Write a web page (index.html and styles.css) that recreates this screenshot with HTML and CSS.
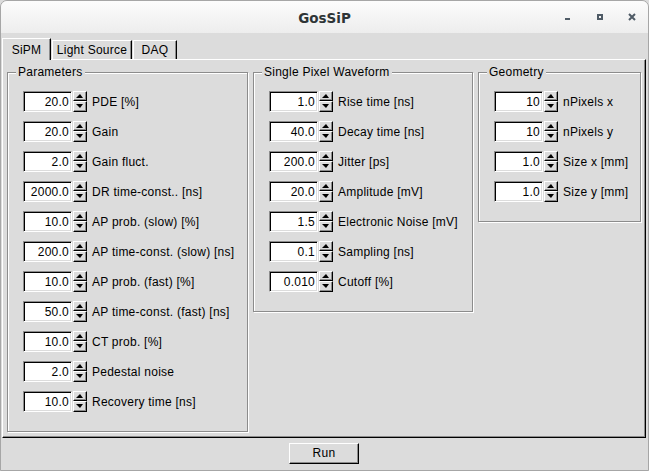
FILE: index.html
```html
<!DOCTYPE html>
<html>
<head>
<meta charset="utf-8">
<title>GosSiP</title>
<link rel="stylesheet" href="styles.css">
</head>
<body>
<div class="window">
  <div class="titlebar">
    <div class="spacer"></div>
    <div class="title">GosSiP</div>
    <div class="controls">
      <span class="ctl"><svg width="8" height="8" viewBox="0 0 8 8"><rect x="1" y="5" width="5" height="2" fill="#4f5b66"/></svg></span>
      <span class="ctl"><svg width="8" height="8" viewBox="0 0 8 8"><path d="M1 1h6v6H1z M3 3v2h2V3z" fill="#4f5b66" fill-rule="evenodd"/></svg></span>
      <span class="ctl"><svg width="8" height="8" viewBox="0 0 8 8"><path d="M1 1L7 7M7 1L1 7" stroke="#4f5b66" stroke-width="2"/></svg></span>
    </div>
  </div>
  <div class="content">
    <div class="tabs">
      <div class="tab active tab-sipm">SiPM</div>
      <div class="tab tab-light">Light Source</div>
      <div class="tab tab-daq">DAQ</div>
    </div>
    <div class="pane">
      <fieldset class="group g-params">
        <legend>Parameters</legend>
        <div class="rows">
          <div class="row"><span class="entry">20.0</span><span class="spin"><span class="up"></span><span class="down"></span></span><span class="label">PDE [%]</span></div>
          <div class="row"><span class="entry">20.0</span><span class="spin"><span class="up"></span><span class="down"></span></span><span class="label">Gain</span></div>
          <div class="row"><span class="entry">2.0</span><span class="spin"><span class="up"></span><span class="down"></span></span><span class="label">Gain fluct.</span></div>
          <div class="row"><span class="entry">2000.0</span><span class="spin"><span class="up"></span><span class="down"></span></span><span class="label">DR time-const.. [ns]</span></div>
          <div class="row"><span class="entry">10.0</span><span class="spin"><span class="up"></span><span class="down"></span></span><span class="label">AP prob. (slow) [%]</span></div>
          <div class="row"><span class="entry">200.0</span><span class="spin"><span class="up"></span><span class="down"></span></span><span class="label">AP time-const. (slow) [ns]</span></div>
          <div class="row"><span class="entry">10.0</span><span class="spin"><span class="up"></span><span class="down"></span></span><span class="label">AP prob. (fast) [%]</span></div>
          <div class="row"><span class="entry">50.0</span><span class="spin"><span class="up"></span><span class="down"></span></span><span class="label">AP time-const. (fast) [ns]</span></div>
          <div class="row"><span class="entry">10.0</span><span class="spin"><span class="up"></span><span class="down"></span></span><span class="label">CT prob. [%]</span></div>
          <div class="row"><span class="entry">2.0</span><span class="spin"><span class="up"></span><span class="down"></span></span><span class="label">Pedestal noise</span></div>
          <div class="row"><span class="entry">10.0</span><span class="spin"><span class="up"></span><span class="down"></span></span><span class="label">Recovery time [ns]</span></div>
        </div>
      </fieldset>
      <fieldset class="group g-wave">
        <legend>Single Pixel Waveform</legend>
        <div class="rows">
          <div class="row"><span class="entry">1.0</span><span class="spin"><span class="up"></span><span class="down"></span></span><span class="label">Rise time [ns]</span></div>
          <div class="row"><span class="entry">40.0</span><span class="spin"><span class="up"></span><span class="down"></span></span><span class="label">Decay time [ns]</span></div>
          <div class="row"><span class="entry">200.0</span><span class="spin"><span class="up"></span><span class="down"></span></span><span class="label">Jitter [ps]</span></div>
          <div class="row"><span class="entry">20.0</span><span class="spin"><span class="up"></span><span class="down"></span></span><span class="label">Amplitude [mV]</span></div>
          <div class="row"><span class="entry">1.5</span><span class="spin"><span class="up"></span><span class="down"></span></span><span class="label">Electronic Noise [mV]</span></div>
          <div class="row"><span class="entry">0.1</span><span class="spin"><span class="up"></span><span class="down"></span></span><span class="label">Sampling [ns]</span></div>
          <div class="row"><span class="entry">0.010</span><span class="spin"><span class="up"></span><span class="down"></span></span><span class="label">Cutoff [%]</span></div>
        </div>
      </fieldset>
      <fieldset class="group g-geom">
        <legend>Geometry</legend>
        <div class="rows">
          <div class="row"><span class="entry">10</span><span class="spin"><span class="up"></span><span class="down"></span></span><span class="label">nPixels x</span></div>
          <div class="row"><span class="entry">10</span><span class="spin"><span class="up"></span><span class="down"></span></span><span class="label">nPixels y</span></div>
          <div class="row"><span class="entry">1.0</span><span class="spin"><span class="up"></span><span class="down"></span></span><span class="label">Size x [mm]</span></div>
          <div class="row"><span class="entry">1.0</span><span class="spin"><span class="up"></span><span class="down"></span></span><span class="label">Size y [mm]</span></div>
        </div>
      </fieldset>
    </div>
    <div class="footer">
      <div class="run">Run</div>
    </div>
  </div>
</div>
</body>
</html>
```
FILE: styles.css
```css
* { box-sizing: border-box; }
html, body { margin: 0; padding: 0; }
body {
  width: 649px;
  height: 471px;
  overflow: hidden;
  background: #dcdcdc;
  font-family: "Liberation Sans", Arial, sans-serif;
  font-size: 12px;
  letter-spacing: 0.25px;
  color: #000;
}
.window {
  width: 649px;
  height: 471px;
  border: 1px solid #a6a6a6;
  border-radius: 7px 7px 0 0;
  display: flex;
  flex-direction: column;
  overflow: hidden;
  background: #dcdcdc;
}
.titlebar {
  height: 32px;
  flex: none;
  display: grid;
  grid-template-columns: 1fr auto 1fr;
  align-items: center;
  background: linear-gradient(#fcfcfc, #ededed);
}
.title {
  font-family: "DejaVu Sans", sans-serif;
  font-weight: bold;
  font-size: 13.5px;
  letter-spacing: 0;
  color: #2e3436;
  padding-top: 1px;
}
.controls {
  justify-self: end;
  display: flex;
}
.ctl {
  width: 32px;
  height: 32px;
  display: flex;
  align-items: center;
  justify-content: center;
}
.ctl svg { display: block; }
.content {
  flex: 1;
  display: flex;
  flex-direction: column;
  padding: 5px 2px 0 1px;
}
.tabs {
  display: flex;
  align-items: flex-end;
  height: 21px;
  position: relative;
  z-index: 1;
}
.tab {
  height: 19px;
  margin-right: 1px;
  border-top: 1px solid #fff;
  border-left: 1px solid #fff;
  border-right: 1px solid #000;
  box-shadow: inset -1px 0 0 #8c8c8c;
  text-align: center;
  line-height: 14px;
  padding-top: 2px;
  background: #dcdcdc;
  white-space: nowrap;
}
.tab.active {
  height: 22px;
  margin-bottom: -1px;
  padding-top: 4px;
}
.tab-sipm { width: 49px; }
.tab-light { width: 80px; }
.tab-daq { width: 44px; }
.pane {
  height: 379px;
  flex: none;
  border-top: 1px solid #fff;
  border-left: 1px solid #fff;
  border-right: 1px solid #000;
  border-bottom: 1px solid #000;
  box-shadow: inset -1px -1px 0 #8c8c8c;
  padding: 5px 0 0 4px;
  display: flex;
  gap: 5px;
  align-items: flex-start;
}
.group {
  margin: 0;
  padding: 0;
  min-width: 0;
  border: 1px solid #8c8c8c;
  box-shadow: inset 1px 1px 0 #fff, 1px 1px 0 #fff;
}
.group legend {
  margin-left: 8px;
  padding: 0 2px;
  line-height: 14px;
  background: #dcdcdc;
  white-space: nowrap;
}
.g-params { width: 241px; }
.g-wave { width: 220px; }
.g-geom { width: 163px; }
.rows {
  padding: 7px 0 15px 15px;
}
.row {
  height: 30px;
  display: flex;
  align-items: center;
}
.entry {
  width: 49px;
  height: 21px;
  border: 1px solid;
  border-color: #8c8c8c #fff #fff #8c8c8c;
  box-shadow: inset 1px 1px 0 #000, inset -1px -1px 0 #dcdcdc;
  background: #fff;
  text-align: right;
  padding-right: 2px;
  padding-top: 1px;
  line-height: 19px;
}
.spin {
  width: 14px;
  height: 21px;
  margin-left: 1px;
  display: flex;
  flex-direction: column;
}
.spin .up, .spin .down {
  border: 1px solid;
  border-color: #fff #000 #000 #fff;
  box-shadow: inset -1px -1px 0 #8c8c8c;
  background: #dcdcdc;
  display: flex;
  align-items: center;
  justify-content: center;
}
.spin .up { height: 10px; }
.spin .down { height: 11px; }
.spin .up::after {
  content: "";
  width: 0;
  height: 0;
  border-left: 4px solid transparent;
  border-right: 3px solid transparent;
  border-bottom: 4px solid #000;
  margin-left: -1px;
}
.spin .down::after {
  content: "";
  width: 0;
  height: 0;
  border-left: 4px solid transparent;
  border-right: 3px solid transparent;
  border-top: 4px solid #000;
  margin-left: -1px;
}
.label {
  margin-left: 5px;
  white-space: nowrap;
  line-height: 14px;
  padding-top: 1px;
}
.footer {
  display: flex;
  justify-content: center;
  padding-top: 5px;
}
.run {
  width: 70px;
  height: 21px;
  border: 1px solid;
  border-color: #fff #000 #000 #fff;
  box-shadow: inset -1px -1px 0 #8c8c8c;
  text-align: center;
  line-height: 19px;
}
```
